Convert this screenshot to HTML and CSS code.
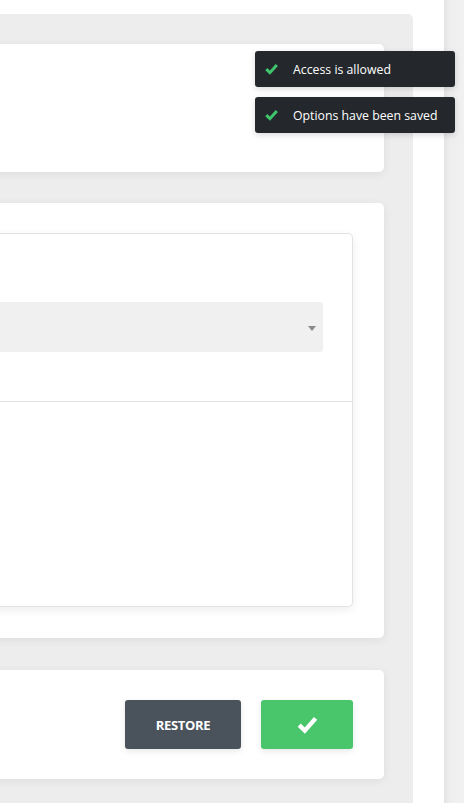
FILE: index.html
```html
<!DOCTYPE html>
<html>
<head>
<meta charset="utf-8">
<link rel="stylesheet" href="styles.css">
</head>
<body>
<div class="page">
  <div class="main">
    <div class="card card-top"></div>
    <div class="card card-mid">
      <div class="box">
        <div class="box-head">
          <div class="select"><span class="caret"></span></div>
        </div>
        <div class="box-body"></div>
      </div>
    </div>
    <div class="card card-foot">
      <button class="btn btn-restore">RESTORE</button>
      <button class="btn btn-save" aria-label="Save">
        <svg width="21" height="19" viewBox="0 0 21 19"><polyline points="2.2,10.2 7.8,15.6 18.6,3.4" fill="none" stroke="#fff" stroke-width="4.4" stroke-linejoin="miter"/></svg>
      </button>
    </div>
  </div>
  <div class="gutter"></div>
  <div class="strip"></div>
</div>
<div class="toasts">
  <div class="toast">
    <svg class="tick" width="13" height="12" viewBox="0 0 13 12"><polyline points="1.3,6.2 4.9,9.7 11.8,1.9" fill="none" stroke="#3fc56c" stroke-width="3"/></svg>
    <span>Access is allowed</span>
  </div>
  <div class="toast">
    <svg class="tick" width="13" height="12" viewBox="0 0 13 12"><polyline points="1.3,6.2 4.9,9.7 11.8,1.9" fill="none" stroke="#3fc56c" stroke-width="3"/></svg>
    <span>Options have been saved</span>
  </div>
</div>
</body>
</html>
```

FILE: styles.css
```css
html, body {
  margin: 0;
  padding: 0;
  background: #ffffff;
  width: 464px;
  height: 803px;
  overflow: hidden;
  font-family: "Open Sans", "Noto Sans", sans-serif;
}

.page {
  display: flex;
  height: 803px;
}

.main {
  flex: 0 0 auto;
  width: 453px;
  margin-left: -40px;
  margin-top: 14px;
  padding: 30px 29px 0 0;
  box-sizing: border-box;
  background: #ededed;
  border-top-right-radius: 5px;
  display: flex;
  flex-direction: column;
  align-items: stretch;
}

.gutter {
  flex: 0 0 31px;
  background: #ffffff;
}

.strip {
  flex: 1 1 auto;
  background: linear-gradient(to right, #e4e4e4 0px, #eeeeee 6px, #f1f1f1 20px);
}

.card {
  background: #ffffff;
  border-radius: 0 5px 5px 0;
  box-shadow: 0 2px 10px rgba(0, 0, 0, 0.07);
  box-sizing: border-box;
}

.card-top {
  height: 128px;
}

.card-mid {
  margin-top: 31px;
  height: 435px;
  padding: 30px 31px 31px 0;
}

.box {
  height: 100%;
  box-sizing: border-box;
  border: 1px solid #e2e2e2;
  border-left: none;
  border-radius: 0 5px 5px 0;
  box-shadow: 0 3px 10px rgba(0, 0, 0, 0.07);
  display: flex;
  flex-direction: column;
}

.box-head {
  height: 168px;
  box-sizing: border-box;
  padding: 68px 29px 0 0;
  border-bottom: 1px solid #e2e2e2;
}

.select {
  height: 50px;
  background: #f0f0f0;
  border-radius: 0 3px 3px 0;
  display: flex;
  align-items: center;
  justify-content: flex-end;
  padding-right: 7px;
}

.caret {
  width: 0;
  height: 0;
  border-left: 4px solid transparent;
  border-right: 4px solid transparent;
  border-top: 5px solid #8a8a8a;
  margin-top: 2px;
}

.box-body {
  flex: 1 1 auto;
}

.card-foot {
  margin-top: 32px;
  height: 109px;
  padding: 30px 31px 0 0;
  display: flex;
  justify-content: flex-end;
  align-items: flex-start;
  gap: 20px;
}

.btn {
  height: 49px;
  border: none;
  border-radius: 3px;
  margin: 0;
  padding: 0;
  display: flex;
  align-items: center;
  justify-content: center;
  box-shadow: 0 2px 6px rgba(0, 0, 0, 0.1);
  font-family: "Open Sans", "Noto Sans", sans-serif;
}

.btn-restore {
  width: 116px;
  background: #4a535b;
  color: #ffffff;
  font-weight: 700;
  font-size: 13px;
  letter-spacing: -0.3px;
}

.btn-save {
  width: 92px;
  background: #49c56b;
}

.toasts {
  position: absolute;
  top: 51px;
  left: 255px;
  width: 200px;
  display: flex;
  flex-direction: column;
  gap: 10px;
}

.toast {
  height: 36px;
  background: #24282c;
  border-radius: 3px;
  display: flex;
  align-items: center;
  padding-left: 10px;
  box-sizing: border-box;
  color: #ffffff;
  font-size: 12.3px;
  box-shadow: 0 2px 6px rgba(0, 0, 0, 0.15);
}

.tick {
  flex: 0 0 auto;
  margin-right: 15px;
}
```
